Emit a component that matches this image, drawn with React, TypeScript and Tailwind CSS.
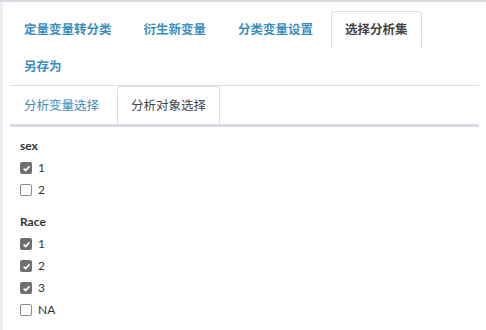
const outerTabs = ["定量变量转分类", "衍生新变量", "分类变量设置", "选择分析集", "另存为"];
const innerTabs = ["分析变量选择", "分析对象选择"];

const groups = [
  { name: "sex", options: [{ v: "1", on: true }, { v: "2", on: false }] },
  {
    name: "Race",
    options: [
      { v: "1", on: true },
      { v: "2", on: true },
      { v: "3", on: true },
      { v: "NA", on: false },
    ],
  },
];

const Box = ({ on }: { on: boolean }) =>
  on ? (
    <span className="flex h-[12px] w-[12px] items-center justify-center rounded-[2px] bg-[#6f6f6f]">
      <svg width="9" height="9" viewBox="0 0 10 10">
        <path d="M1.8 5.2 L4 7.4 L8.3 2.6" fill="none" stroke="#fff" strokeWidth="1.8" />
      </svg>
    </span>
  ) : (
    <span className="block h-[12px] w-[12px] rounded-[2px] border border-[#8a8a8a] bg-white" />
  );

const App = () => {
  return (
    <div
      className="h-[330px] w-[486px] overflow-hidden border-t-2 border-[#d8dbe2] bg-[#ecf0f5]"
      style={{ fontFamily: "Lato, 'Noto Sans CJK SC', sans-serif" }}
    >
      <div className="ml-[3px] h-full bg-white pl-[7px] pr-[7px] pt-[9px]">
        {/* outer tabs */}
        <ul className="flex flex-wrap border-b border-[#dddddd]">
          {outerTabs.map((t) => {
            const active = t === "选择分析集";
            return (
              <li key={t} className="mr-[4px]">
                <span
                  className={
                    "block rounded-t-[4px] border px-[13px] py-[9px] text-[12.5px] leading-[17px] font-bold " +
                    (active
                      ? "border-[#dddddd] border-b-transparent bg-white text-[#444444]"
                      : "border-transparent text-[#3c8dbc]")
                  }
                >
                  {t}
                </span>
              </li>
            );
          })}
        </ul>

        {/* inner tabs */}
        <ul className="flex border-b-[3px] border-[#d8dbe2]">
          {innerTabs.map((t, i) => {
            const active = i === 1;
            return (
              <li key={t} className="mr-[4px]">
                <span
                  className={
                    "block rounded-t-[4px] border border-b-0 px-[13px] pt-[10px] pb-[10px] text-[12.5px] leading-[17px] " +
                    (active
                      ? "border-[#dddddd] bg-white text-[#444444]"
                      : "border-transparent text-[#3c8dbc]")
                  }
                >
                  {t}
                </span>
              </li>
            );
          })}
        </ul>

        <div className="pl-[10px] pt-[10px] text-[12px] text-[#333333]">
          {groups.map((g, gi) => (
            <div key={g.name} className={gi > 0 ? "mt-[12px]" : ""}>
              <div className="mb-[2px] font-bold leading-[18px]">{g.name}</div>
              {g.options.map((o) => (
                <label key={o.v} className="flex h-[22px] items-center gap-[6px]">
                  <Box on={o.on} />
                  <span className="leading-[16px]">{o.v}</span>
                </label>
              ))}
            </div>
          ))}
        </div>
      </div>
    </div>
  );
};

export default App;
